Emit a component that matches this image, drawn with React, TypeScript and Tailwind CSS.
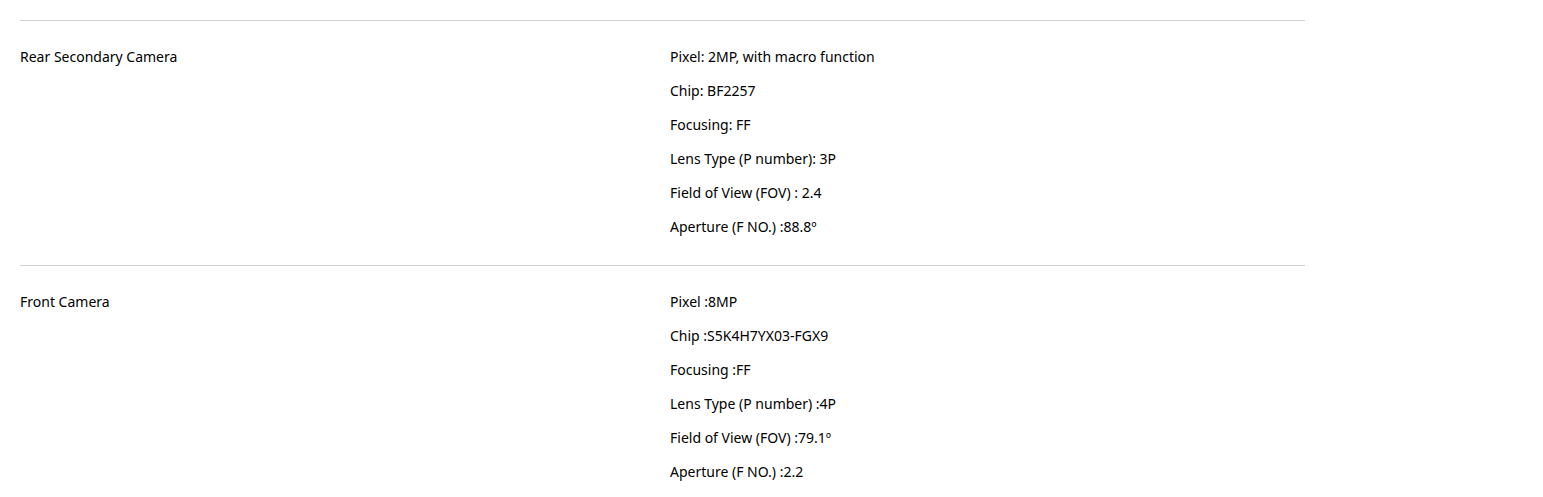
const specs = [
  {
    label: 'Rear Secondary Camera',
    items: [
      'Pixel: 2MP, with macro function',
      'Chip: BF2257',
      'Focusing: FF',
      'Lens Type (P number): 3P',
      'Field of View (FOV) : 2.4',
      'Aperture (F NO.) :88.8º',
    ],
  },
  {
    label: 'Front Camera',
    items: [
      'Pixel :8MP',
      'Chip :S5K4H7YX03-FGX9',
      'Focusing :FF',
      'Lens Type (P number) :4P',
      'Field of View (FOV) :79.1º',
      'Aperture (F NO.) :2.2',
    ],
  },
];

export default function App() {
  return (
    <div className="min-h-screen bg-white px-5 pt-5 font-['Noto_Sans',sans-serif] text-[14px] text-black">
      <div className="w-[1285px]">
        {specs.map((spec) => (
          <div key={spec.label} className="flex border-t border-[#d2d2d2] pt-[26px] pb-[14px]">
            <div className="w-[650px] leading-5">{spec.label}</div>
            <ul className="flex-1">
              {spec.items.map((item) => (
                <li key={item} className="mb-[14px] leading-5">
                  {item}
                </li>
              ))}
            </ul>
          </div>
        ))}
      </div>
    </div>
  );
}
